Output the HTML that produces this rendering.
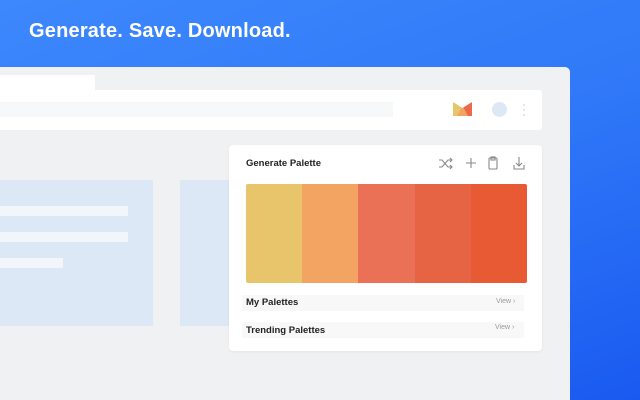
<!DOCTYPE html>
<html><head><style>
*{margin:0;padding:0;box-sizing:border-box}
html,body{width:640px;height:400px;overflow:hidden}
body{position:relative;background:linear-gradient(160deg,#3d88fc 0%,#2f78f8 50%,#1a5af0 100%);font-family:"Liberation Sans",sans-serif}
.a{position:absolute}
</style></head><body>
<div class="a" style="left:29px;top:20px;color:#fff;font-size:20px;font-weight:bold;letter-spacing:0.2px">Generate. Save. Download.</div>
<div class="a" style="left:0;top:67px;width:570px;height:333px;background:#f0f1f3;border-top-right-radius:5px"></div>
<div class="a" style="left:0;top:75px;width:95px;height:16px;background:#fff"></div>
<div class="a" style="left:0;top:90px;width:542px;height:40px;background:#fff;border-radius:0 3px 3px 0"></div>
<div class="a" style="left:0;top:102px;width:393px;height:15px;background:#f7f8f9"></div>
<svg class="a" style="left:453px;top:102px" width="19" height="14" viewBox="0 0 19 14">
<rect x="0" y="0" width="10" height="14" fill="#e8c46a"/>
<rect x="9.5" y="0" width="9.5" height="14" fill="#ea6a4b"/>
<path d="M4 14 L9.5 4 L15 14Z" fill="#f4a462"/>
<path d="M0 0 L9.5 6 L19 0Z" fill="#fff"/>
</svg>
<div class="a" style="left:492px;top:102px;width:15px;height:15px;border-radius:50%;background:#dde8f5"></div>
<div class="a" style="left:523px;top:104px;width:2px;height:2px;background:#dde8f5;box-shadow:0 5px #dde8f5,0 10px #dde8f5"></div>
<div class="a" style="left:0;top:180px;width:153px;height:146px;background:#dce8f5"></div>
<div class="a" style="left:180px;top:180px;width:80px;height:146px;background:#dce8f5"></div>
<div class="a" style="left:0;top:206px;width:128px;height:10px;background:#f2f6fb"></div>
<div class="a" style="left:0;top:232px;width:128px;height:10px;background:#f2f6fb"></div>
<div class="a" style="left:0;top:258px;width:63px;height:10px;background:#f2f6fb"></div>
<div class="a" style="left:229px;top:145px;width:313px;height:206px;background:#fff;border-radius:4px;box-shadow:0 1px 3px rgba(0,0,0,.05)"></div>
<div class="a" style="left:246px;top:158px;font-size:9.5px;font-weight:bold;color:#222">Generate Palette</div>
<svg class="a" style="left:438px;top:155px" width="92" height="16" viewBox="0 0 92 16" fill="none" stroke="#888" stroke-width="1.1">
<path d="M1 5h3l6 7h4M1 12h3l6-7h4M12 3l2 2-2 2M12 10l2 2-2 2"/>
<path d="M33 3v10M28 8h10"/>
<rect x="51" y="3" width="8" height="11" rx="1"/><rect x="53" y="2" width="4" height="3"/>
<path d="M81 2v9M78 8l3 3 3-3M76 10v4h10v-4"/>
</svg>
<div class="a" style="left:246px;top:184px;width:281px;height:99px;border-radius:2px;overflow:hidden;display:flex">
<div style="flex:1;background:#e8c46a"></div><div style="flex:1;background:#f4a462"></div><div style="flex:1;background:#ea7155"></div><div style="flex:1;background:#e66444"></div><div style="flex:1;background:#e85a33"></div>
</div>
<div class="a" style="left:242px;top:295px;width:282px;height:16px;background:#f8f8f9"></div>
<div class="a" style="left:242px;top:322px;width:282px;height:16px;background:#f8f8f9"></div>
<div class="a" style="left:246px;top:297px;font-size:9.5px;font-weight:bold;color:#222">My Palettes</div>
<div class="a" style="left:246px;top:325px;font-size:9.5px;font-weight:bold;color:#222">Trending Palettes</div>
<div class="a" style="left:496px;top:298px;font-size:7px;color:#999">View &#8250;</div>
<div class="a" style="left:495px;top:324px;font-size:7px;color:#999">View &#8250;</div>
</body></html>
